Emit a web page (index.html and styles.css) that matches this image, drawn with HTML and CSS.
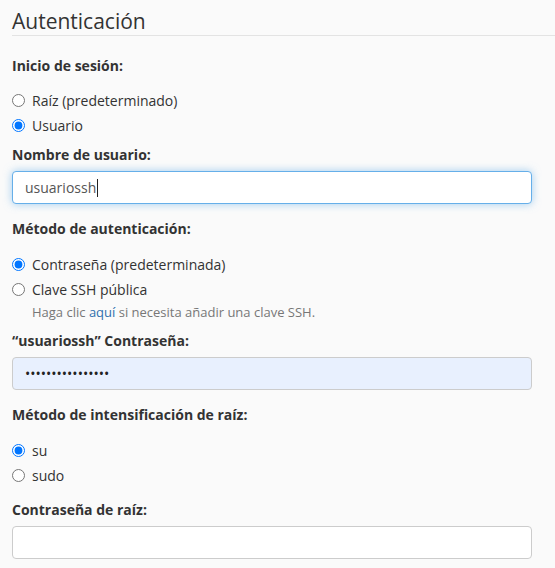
FILE: index.html
```html
<!DOCTYPE html>
<html lang="es">
<head>
<meta charset="utf-8">
<title>Autenticación</title>
<link rel="stylesheet" href="styles.css">
</head>
<body>
<h1 class="title">Autenticación</h1>
<form class="form">
  <div class="group">
    <div class="label label-radios">Inicio de sesión:</div>
    <label class="radio"><input type="radio" name="login"><span>Raíz (predeterminado)</span></label>
    <label class="radio"><input type="radio" name="login" checked><span>Usuario</span></label>
  </div>
  <div class="group gap-s">
    <div class="label">Nombre de usuario:</div>
    <div class="control focused">usuariossh<span class="caret"></span></div>
  </div>
  <div class="group gap-l">
    <div class="label label-radios wide">Método de autenticación:</div>
    <label class="radio"><input type="radio" name="auth" checked><span>Contraseña (predeterminada)</span></label>
    <label class="radio"><input type="radio" name="auth"><span>Clave SSH pública</span></label>
    <p class="help">Haga clic <a href="#">aquí</a> si necesita añadir una clave SSH.</p>
  </div>
  <div class="group gap-m">
    <div class="label">“usuariossh” Contraseña:</div>
    <input class="control autofill" type="password" value="xxxxxxxxxxxxxxxx">
  </div>
  <div class="group gap-l">
    <div class="label label-radios wide">Método de intensificación de raíz:</div>
    <label class="radio"><input type="radio" name="esc" checked><span>su</span></label>
    <label class="radio"><input type="radio" name="esc"><span>sudo</span></label>
  </div>
  <div class="group gap-ml">
    <div class="label">Contraseña de raíz:</div>
    <input class="control" type="password" value="">
  </div>
</form>
</body>
</html>
```
FILE: styles.css
```css
html, body {
  margin: 0;
  padding: 0;
  background: #fafafa;
}
body {
  font-family: "Open Sans", "Liberation Sans", sans-serif;
  font-size: 14px;
  color: #333;
  padding-left: 12px;
}
.title {
  margin: 0;
  padding-top: 7px;
  font-size: 21px;
  line-height: 28px;
  font-weight: 400;
  color: #333;
  border-bottom: 1px solid #e3e3e3;
}
.form {
  padding-right: 23px;
  padding-top: 20px;
}
.group {
  display: flex;
  flex-direction: column;
}
.gap-s {
  margin-top: 7px;
}
.gap-m {
  margin-top: 10px;
}
.gap-ml {
  margin-top: 12px;
}
.gap-l {
  margin-top: 15px;
}
.label {
  font-weight: 700;
  line-height: 20px;
  margin-bottom: 6px;
}
.label-radios {
  margin-bottom: 12px;
}
.label-radios.wide {
  margin-bottom: 13px;
}
.radio {
  display: flex;
  align-items: center;
  height: 25px;
  line-height: 25px;
}
.radio input {
  margin: 0 7px 0 0;
  width: 13px;
  height: 13px;
}
.control {
  box-sizing: border-box;
  height: 33px;
  width: 100%;
  border: 1px solid #ccc;
  border-radius: 4px;
  background: #fff;
  padding: 6px 12px;
  font-family: inherit;
  font-size: 14px;
  line-height: 19px;
  color: #555;
  display: flex;
  align-items: center;
}
.focused {
  border-color: #66afe9;
  box-shadow: 0 0 8px rgba(102, 175, 233, 0.6);
}
.caret {
  display: inline-block;
  width: 1px;
  height: 18px;
  background: #222;
  margin-left: 1px;
}
.autofill {
  background: #e8f0fe;
  color: #222;
}
.help {
  margin: 2px 0 0 20px;
  font-size: 13px;
  line-height: 17px;
  color: #777;
}
.help a {
  color: #2f6fad;
  text-decoration: none;
}
```
